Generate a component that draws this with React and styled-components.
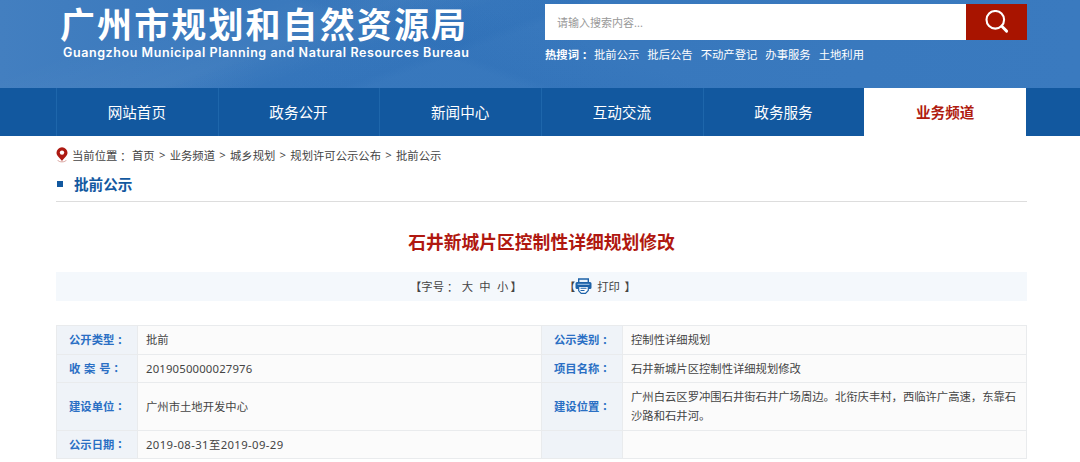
import React from "react";
import styled, { createGlobalStyle } from "styled-components";

const navItems = [
  "网站首页",
  "政务公开",
  "新闻中心",
  "互动交流",
  "政务服务",
  "业务频道",
];

const hotWords = ["批前公示", "批后公告", "不动产登记", "办事服务", "土地利用"];

const crumbs = ["首页", "业务频道", "城乡规划", "规划许可公示公布", "批前公示"];

const details = [
  ["公开类型", "批前", "公示类别", "控制性详细规划"],
  ["收 案 号", "2019050000027976", "项目名称", "石井新城片区控制性详细规划修改"],
  [
    "建设单位",
    "广州市土地开发中心",
    "建设位置",
    "广州白云区罗冲围石井街石井广场周边。北衔庆丰村，西临许广高速，东靠石沙路和石井河。",
  ],
  ["公示日期", "2019-08-31至2019-09-29", "", ""],
];

const getSpacing = (value) => {
  if (value.includes("-")) return "0.38px";
  return /^\d+$/.test(value) ? "0.17px" : "0";
};

const App = () => {
  return (
    <>
      <GlobalStyle />
      <Header>
        <HeaderInner>
          <Logo>
            <LogoName>广州市规划和自然资源局</LogoName>
            <LogoEnglish>
              Guangzhou Municipal Planning and Natural Resources Bureau
            </LogoEnglish>
          </Logo>
          <SearchArea>
            <SearchForm onSubmit={(e) => e.preventDefault()}>
              <SearchInput placeholder="请输入搜索内容..." />
              <SearchButton aria-label="搜索">
                <SearchIcon />
              </SearchButton>
            </SearchForm>
            <HotWords>
              <strong>
                热搜词<Colon>：</Colon>
              </strong>
              {hotWords.map((word) => (
                <span key={word}>{word}</span>
              ))}
            </HotWords>
          </SearchArea>
        </HeaderInner>
      </Header>
      <Nav>
        <NavInner>
          {navItems.map((item) => (
            <NavItem key={item} $active={item === "业务频道"}>
              {item}
            </NavItem>
          ))}
        </NavInner>
      </Nav>
      <Page>
        <Breadcrumb>
          <PinIcon />
          <CrumbLabel>
            当前位置<Colon>：</Colon>
          </CrumbLabel>
          {crumbs.map((crumb, i) => (
            <React.Fragment key={crumb}>
              {i > 0 && <Separator>&gt;</Separator>}
              <span>{crumb}</span>
            </React.Fragment>
          ))}
        </Breadcrumb>
        <SectionTitle>批前公示</SectionTitle>
        <ArticleTitle>石井新城片区控制性详细规划修改</ArticleTitle>
        <Toolbar>
          <FontSizes>
            <span>
              【字号<Colon>：</Colon>
            </span>
            <span>大</span>
            <span>中</span>
            <span>小</span>
            <CloseBracket $pull={4}>】</CloseBracket>
          </FontSizes>
          <Print>
            <span>【</span>
            <PrinterIcon />
            <span>打印</span>
            <CloseBracket $pull={1}>】</CloseBracket>
          </Print>
        </Toolbar>
        <Details>
          {details.map(([label, value, label2, value2]) => (
            <React.Fragment key={label}>
              <Label>
                <span>{label}</span>
                <Colon>：</Colon>
              </Label>
              <Value $spacing={getSpacing(value)}>{value}</Value>
              <Label>
                <span>{label2}</span>
                {label2 && <Colon>：</Colon>}
              </Label>
              <Value $spacing="0">{value2}</Value>
            </React.Fragment>
          ))}
        </Details>
      </Page>
    </>
  );
};

const SearchIcon = () => (
  <svg width="24" height="24" viewBox="0 0 24 24" fill="none" stroke="#fff">
    <circle cx="10.3" cy="9.8" r="8.8" strokeWidth="2.1" />
    <path d="M16.8 16.3L21.6 21.1" strokeWidth="2.9" strokeLinecap="round" />
  </svg>
);

const PinIcon = () => (
  <svg width="12" height="16" viewBox="0 0 12 16">
    <path d="M1.8 13.2C2.6 15.4 9.4 15.4 10.2 13.2" fill="none" stroke="#d9a19b" />
    <path
      d="M6 0.3a5.5 5.5 0 0 0-5.5 5.5C0.5 9.2 4.2 11 6 14c1.8-3 5.5-4.8 5.5-8.2A5.5 5.5 0 0 0 6 .3z"
      fill="#ad1a12"
    />
    <circle cx="6" cy="5.6" r="2.2" fill="#fff" />
  </svg>
);

const PrinterIcon = () => (
  <svg width="17" height="16" viewBox="0 0 17 16">
    <path d="M3.7 4.5V1h9.6v3.5" fill="#eef5fb" stroke="#1d62a8" strokeWidth="1.4" />
    <path
      d="M2 4h13a1.5 1.5 0 0 1 1.5 1.5v4A1.5 1.5 0 0 1 15 11H2A1.5 1.5 0 0 1 .5 9.5v-4A1.5 1.5 0 0 1 2 4z"
      fill="#1d62a8"
    />
    <path d="M2.5 6.3h12" stroke="#a9cbea" />
    <path
      d="M3.7 8.3h9.6v4.2l-2.8 2.8H6.2l-2.5-2.5z"
      fill="#fff"
      stroke="#1d62a8"
      strokeWidth="1.2"
    />
    <path d="M5.5 10.3h6M5.5 12.5h4" stroke="#1d62a8" strokeWidth="1.1" />
  </svg>
);

const GlobalStyle = createGlobalStyle`
  * {
    box-sizing: border-box;
  }
  body {
    margin: 0;
    height: 462px;
    overflow: hidden;
    background: #fff;
    color: #444;
    font-family: "Noto Sans", "Noto Sans CJK SC", sans-serif;
    font-size: 11.33px;
  }
`;

// the TC face centres the full-width colon in its box
const Colon = styled.span`
  font-family: "Noto Sans CJK TC", sans-serif;
  line-height: 1;
  vertical-align: -1px;
`;

const Header = styled.header`
  height: 88px;
  background:
    linear-gradient(160deg, transparent 30%, rgba(20, 90, 170, 0.1) 44%, transparent 46%),
    linear-gradient(200deg, transparent 46%, rgba(20, 90, 170, 0.1) 58%, transparent 60%),
    linear-gradient(340deg, transparent 62%, rgba(255, 255, 255, 0.04) 70%, transparent 84%),
    linear-gradient(90deg, #437fc0 0%, #3777bc 24%, #3878bd 60%, #3a7abf 100%);
`;

const HeaderInner = styled.div`
  width: 970px;
  margin-left: 57px;
  display: flex;
`;

const Logo = styled.div`
  width: 488px;
  padding: 0 0 0 3px;
  color: #fff;
  white-space: nowrap;
`;

const LogoName = styled.h1`
  margin: 0;
  font-family: "Noto Sans CJK SC", sans-serif;
  font-size: 35px;
  line-height: 45px;
  font-weight: 700;
  letter-spacing: 2.1px;
`;

const LogoEnglish = styled.p`
  margin: 0 0 0 3px;
  font-family: Inter, sans-serif;
  font-size: 12.5px;
  line-height: 15px;
  font-weight: 600;
  letter-spacing: 0.58px;
`;

const SearchArea = styled.div`
  width: 482px;
  padding-top: 4px;
`;

const SearchForm = styled.form`
  display: flex;
  height: 36px;
`;

const SearchInput = styled.input`
  flex: 1;
  min-width: 0;
  border: 0;
  padding: 0 12px;
  background: #fff;
  font: inherit;
  font-size: 11px;
  &::placeholder {
    color: #999;
  }
`;

const SearchButton = styled.button`
  width: 61px;
  border: 0;
  padding: 0;
  display: flex;
  align-items: center;
  justify-content: center;
  background: #a81400;
`;

const HotWords = styled.div`
  display: flex;
  gap: 8px;
  margin-top: 7px;
  line-height: 16px;
  color: #fff;
  strong {
    margin-right: -15px;
    width: 56px;
  }
`;

const Nav = styled.nav`
  height: 48px;
  background: #12589f;
`;

const NavInner = styled.div`
  width: 970px;
  margin-left: 56px;
  display: grid;
  grid-template-columns: repeat(6, 1fr);
`;

const NavItem = styled.a`
  height: 48px;
  line-height: 49px;
  padding-right: 1px;
  border-left: 1px solid ${(props) => (props.$active ? "#fff" : "#1e66ab")};
  background: ${(props) => (props.$active ? "#fff" : "transparent")};
  color: ${(props) => (props.$active ? "#b01c10" : "#fff")};
  font-size: 14.6px;
  font-weight: ${(props) => (props.$active ? 700 : 400)};
  text-align: center;
`;

const Page = styled.main`
  width: 971px;
  margin-left: 56px;
`;

const Breadcrumb = styled.div`
  display: flex;
  align-items: center;
  height: 37px;
  white-space: nowrap;
`;

const CrumbLabel = styled.span`
  margin-left: 4px;
  width: 60px;
`;

const Separator = styled.span`
  width: 15px;
  text-align: center;
`;

const SectionTitle = styled.h2`
  display: flex;
  align-items: center;
  gap: 11px;
  margin: 0;
  height: 29px;
  padding-bottom: 7px;
  border-bottom: 1px solid #ddd;
  color: #12589f;
  font-size: 14.6px;
  line-height: 20px;
  &::before {
    content: "";
    width: 6px;
    height: 6px;
    margin-left: 1px;
    background: #12589f;
  }
`;

const ArticleTitle = styled.h3`
  margin: 26px 0 16px;
  color: #b01810;
  font-size: 17.8px;
  line-height: 28px;
  text-align: center;
`;

const Toolbar = styled.div`
  display: flex;
  height: 29px;
  padding: 0 0 1px 354px;
  align-items: center;
  background: #f4f8fc;
`;

const FontSizes = styled.div`
  display: flex;
  gap: 6.3px;
`;

const CloseBracket = styled.span`
  margin-left: -${(props) => props.$pull}px;
`;

const Print = styled.div`
  display: flex;
  align-items: center;
  margin-left: 42px;
  gap: 5.5px;
  svg {
    margin-left: -6px;
  }
`;

const Details = styled.div`
  display: grid;
  grid-template-columns: 81px 404px 81px 404px;
  grid-template-rows: 29px 28px 48px 28px;
  margin-top: 24px;
  border-top: 1px solid #e9ebed;
  border-left: 1px solid #e9ebed;
`;

const Cell = styled.div`
  display: flex;
  align-items: center;
  border-right: 1px solid #e9ebed;
  border-bottom: 1px solid #e9ebed;
  line-height: 19px;
`;

const Label = styled(Cell)`
  padding: 0 0 1px 12px;
  background: #eff3f8;
  color: #2a6fc4;
  font-weight: 700;
  white-space: pre;
  word-spacing: 0.8px;
  ${Colon} {
    margin-top: 2px;
  }
`;

const Value = styled(Cell)`
  padding: 0 7px 1px 8px;
  background: #fbfbfb;
  letter-spacing: ${(props) => props.$spacing};
`;

export default App;
